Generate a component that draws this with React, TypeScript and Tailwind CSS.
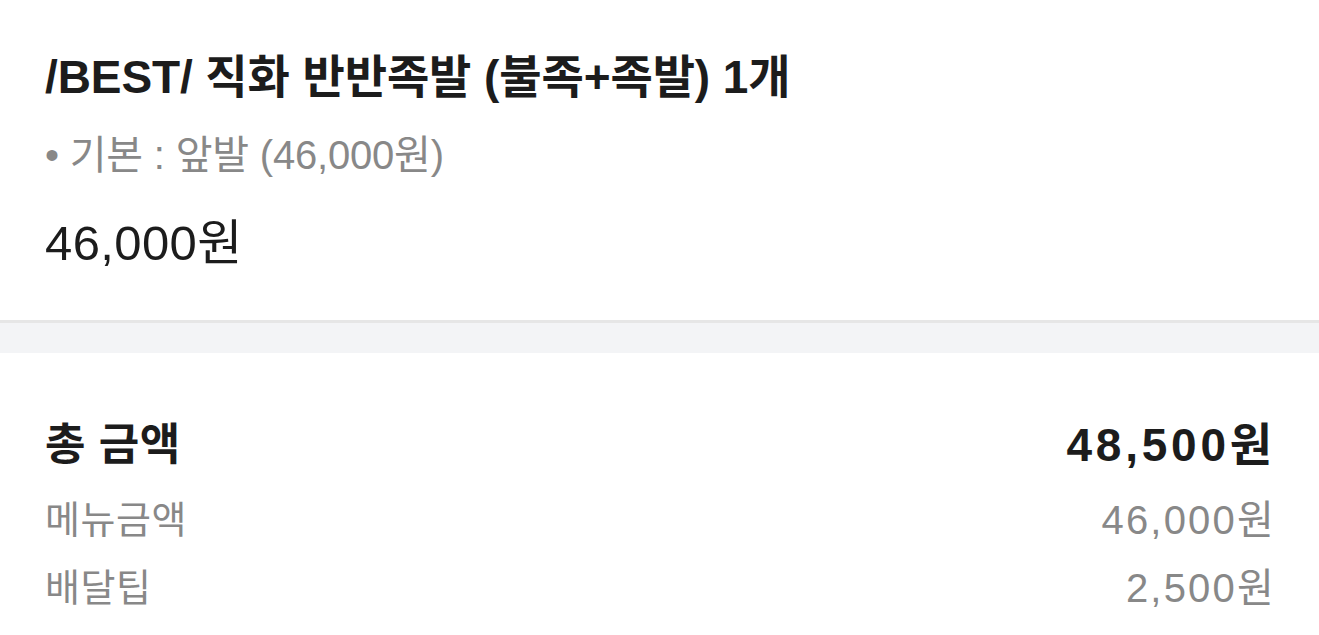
const font = { fontFamily: '"Liberation Sans", "Noto Sans CJK KR", sans-serif' };

const App = () => {
  return (
    <div className="w-full min-h-screen bg-white" style={font}>
      {/* Menu item */}
      <section className="px-[45px] pt-[49px] pb-[49px]">
        <h1 className="text-[46px] leading-[56px] font-bold text-[#1c1c1c] tracking-[-0.1px]">
          /BEST/ 직화 반반족발 (불족+족발) 1개
        </h1>
        <p className="mt-[25px] text-[40px] leading-[50px] text-[#888888] tracking-[-0.2px]">
          • 기본 : 앞발 (46,000원)
        </p>
        <p className="mt-[35px] text-[49px] leading-[56px] text-[#1c1c1c] tracking-[0.4px]">
          46,000원
        </p>
      </section>

      {/* Divider */}
      <div className="h-[3px] bg-[#e6e6e6]" />
      <div className="h-[30px] bg-[#f3f4f6]" />

      {/* Totals */}
      <section className="pl-[45px] pt-[64px] pr-[43px]">
        <div className="flex items-center justify-between h-[56px] text-[#1c1c1c] font-bold">
          <span className="text-[44px] tracking-[0.5px]">총 금액</span>
          <span className="text-[46px] tracking-[3.8px]">48,500원</span>
        </div>
        <div className="mt-[21px] flex items-center justify-between h-[52px] text-[#888888]">
          <span className="text-[38px] tracking-[0.5px]">메뉴금액</span>
          <span className="text-[40px] tracking-[2.2px]">46,000원</span>
        </div>
        <div className="mt-[16px] flex items-center justify-between h-[52px] text-[#888888]">
          <span className="text-[38px] tracking-[0.5px]">배달팁</span>
          <span className="text-[40px] tracking-[2.2px]">2,500원</span>
        </div>
      </section>
    </div>
  );
};

export default App;
